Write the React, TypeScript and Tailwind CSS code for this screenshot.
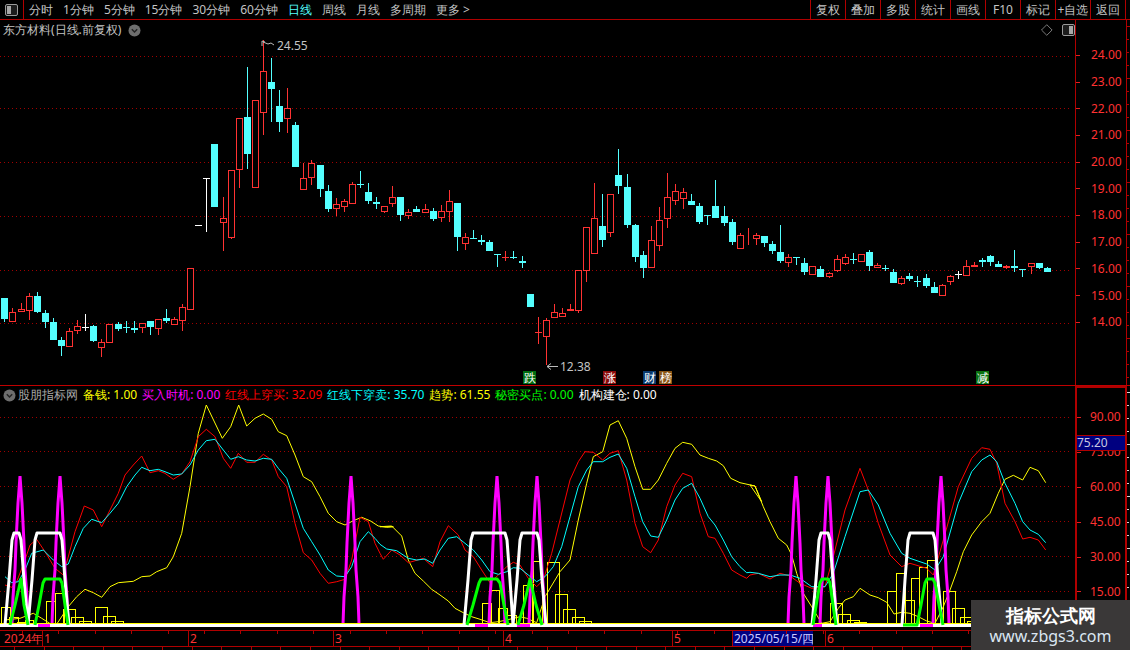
type Candle = [string, number, number, number, number];

// kind, body top, body bottom, wick top, wick bottom (page pixels)
const candles: Candle[] = [
  ["c",298,319,298,322],["r",312,322,308,322],["r",309,312,303,312],["r",296,311,293,320],["c",296,312,292,313],
  ["c",313,322,310,328],["c",322,340,318,340],["c",340,346,337,356],["r",331,347,328,347],["r",326,331,320,334],
  ["w",327,327,314,331],["c",326,341,325,342],["r",342,348,339,357],["r",324,343,324,343],["c",324,329,322,331],
  ["c",327,327,321,333],["c",328,330,321,333],["r",323,328,323,333],["c",321,327,321,335],["r",319,329,319,335],
  ["c",318,321,309,323],["r",319,325,317,325],["r",307,321,304,331],["r",268,310,268,310],["w",225,225,225,225],
  ["w",178,178,178,232],["c",144,207,144,207],["r",218,223,197,251],["r",170,238,170,239],["r",118,170,118,188],
  ["c",117,154,67,169],["r",100,188,100,188],["r",71,113,40,135],["c",82,89,58,122],["c",106,122,90,132],
  ["r",108,119,88,133],["c",125,167,122,167],["r",178,190,163,190],["r",163,178,160,185],["c",165,189,165,197],
  ["c",191,209,185,212],["r",204,209,198,216],["r",201,207,199,212],["r",184,204,182,204],["c",184,184,171,188],
  ["c",192,201,183,204],["c",202,204,197,209],["r",206,212,206,213],["r",197,204,186,207],["c",197,215,197,221],
  ["r",212,216,209,219],["c",209,212,206,212],["r",209,213,204,213],["c",211,219,208,221],["r",211,218,205,222],
  ["r",201,212,190,222],["c",203,237,203,251],["r",237,244,233,250],["c",238,238,230,238],["c",240,242,235,245],
  ["c",242,251,240,251],["c",254,255,254,267],["r",257,257,251,261],["c",257,257,251,259],["c",261,263,256,268],
  ["c",294,307,294,307],["r",332,332,317,344],["r",320,337,318,365],["r",312,318,304,318],["r",313,317,308,317],
  ["r",309,311,304,311],["r",270,311,270,313],["r",227,271,227,282],["r",218,254,183,254],["c",226,240,194,247],
  ["r",194,233,194,237],["c",175,186,149,194],["c",187,225,174,228],["c",225,257,224,262],["c",255,268,251,278],
  ["r",240,268,226,268],["r",220,246,207,251],["r",197,219,173,228],["r",191,201,184,205],["r",192,199,188,209],
  ["c",201,205,194,205],["c",206,222,203,224],["c",215,215,215,225],["c",206,218,180,218],["c",216,223,206,226],
  ["c",222,242,219,245],["r",235,249,233,249],["r",234,235,228,245],["r",235,239,233,245],["c",236,243,236,247],
  ["c",244,251,241,254],["c",252,261,225,263],["r",257,263,254,267],["c",257,258,257,265],["c",263,272,258,275],
  ["r",266,275,266,275],["c",269,277,266,277],["r",273,277,272,278],["r",259,271,255,272],["r",257,264,254,265],
  ["c",259,259,253,264],["r",254,262,254,262],["c",252,266,250,271],["r",265,268,263,268],["c",268,268,265,271],
  ["c",272,283,269,283],["r",278,284,276,285],["c",276,279,273,281],["c",281,281,276,287],["c",278,286,274,288],
  ["c",287,293,282,293],["r",285,296,284,296],["r",276,282,275,285],["w",274,274,271,279],["r",266,276,260,276],
  ["r",265,267,262,267],["c",260,262,258,267],["c",256,262,255,266],["c",264,267,261,267],["r",266,268,265,269],
  ["c",266,268,250,272],["c",269,269,269,277],["r",263,267,263,274],["c",263,268,263,269],["c",268,272,267,272],
];

const yellowLine = [
  [0,[15,660,60,655,100,640,125,655,165,680,205,620,230,590,255,568,280,578,305,592,330,560,355,548,400,544,425,530,450,528,470,515,500,503,520,470,545,400,570,260,595,100,619,15,667,115,692,80,716,15,740,78,765,55,790,42,815,58,835,95,860,107,885,165,910,230,935,245,960,290,985,340,1010,365,1035,375,1060,362,1085,352,1110,362,1135,378,1160,382,1180,380]],
  [380,[0,380,35,378,65,408,85,480,105,520,130,543,155,568,180,585,205,603,225,625,250,638,275,650,300,658,330,668,355,665,380,660,420,650,440,655,470,668,495,590,540,515,570,480,595,360,620,250,640,170,668,155,690,75,715,62,740,115,765,200,788,268,812,268,835,240,860,190,885,145,908,127,935,133,960,165,985,175,1010,183,1030,197,1052,235,1080,248,1125,258,1145,305]],
  [750,[0,255,15,258,40,320,60,365,85,415,110,435,125,465,140,520,160,580,185,620,215,670,240,665,265,625,285,600,310,590,330,565,360,585,385,593,410,607,432,642,455,637,480,640,505,650,530,663,555,670,580,620,600,570,620,515,640,455,665,405,695,365,720,340,745,280,765,238,790,226,818,240,840,202,865,212,887,248]],
] as [number, number[]][];

const redLine = [
  [0,[15,555,35,562,50,545,75,480,90,435,110,418,135,455,165,505,190,525,205,470,225,395,253,318,280,330,305,380,330,330,355,280,375,225,400,195,425,168,450,218,475,212,495,220,520,238,545,222,570,185,595,110,619,88,645,110,670,175,692,205,715,160,740,187,765,187,790,163,815,180,835,230,860,260,885,370,910,458,935,480,960,520,985,550,1010,545,1035,538,1055,480,1080,352,1105,365,1125,430]],
  [380,[0,460,10,478,35,450,60,465,85,488,130,475,158,500,180,425,205,377,235,405,255,450,280,470,305,510,330,548,355,525,380,500,400,487,420,495,445,535,470,560,490,540,515,460,540,360,570,240,595,185,615,155,640,157,668,180,690,160,715,152,740,240,765,370,788,440,812,458,835,420,860,320,885,255,908,220,935,230,960,340,985,410,1005,415,1030,460,1055,510,1080,525,1100,535]],
  [750,[0,525,25,520,60,537,90,520,120,528,150,550,185,565,225,560,250,470,285,330,330,205,355,270,385,370,420,465,455,500,480,490,530,505,550,525,580,420,625,260,665,175,695,143,720,148,740,190,765,310,795,365,818,417,840,412,865,420,887,450]],
] as [number, number[]][];

const cyanLine = [
  [0,[15,530,35,548,55,545,75,510,95,460,130,450,160,480,185,500,205,492,225,440,250,385,275,358,305,368,330,340,355,310,380,260,405,225,425,202,450,212,475,208,495,215,520,225,545,222,570,195,595,150,619,122,645,118,670,150,692,178,715,170,740,180,765,183,790,175,815,178,835,205,860,235,885,310,910,385,935,425,960,465,985,510,1010,528,1035,530,1055,500,1080,425,1105,395,1125,415]],
  [380,[0,433,20,447,50,452,85,475,110,480,135,477,158,490,180,450,205,415,230,410,255,430,280,450,305,480,330,515,355,523,380,515,400,503,420,505,445,525,470,545,495,530,520,500,545,440,570,350,595,260,620,210,640,185,668,185,690,172,715,162,740,205,765,290,788,365,812,408,835,412,860,360,885,300,908,265,935,250,960,295,985,350,1005,375,1030,420,1055,470,1080,500,1100,518]],
  [750,[0,517,25,520,60,530,90,525,120,525,150,535,185,560,225,560,250,520,285,410,330,275,355,270,385,315,420,400,455,460,480,475,530,492,555,510,580,470,625,310,665,215,695,180,720,165,740,185,765,250,795,310,818,365,840,390,865,403,887,428]],
] as [number, number[]][];

// the zoomed crops were 3x, so the points above are scaled back here
function toPoints(parts: [number, number[]][]) {
  const out: string[] = [];
  for (const [x0, pts] of parts) {
    for (let i = 0; i < pts.length; i += 2) {
      out.push(`${(x0 + pts[i] / 3).toFixed(1)},${(400 + pts[i + 1] / 3).toFixed(1)}`);
    }
  }
  return out.join(" ");
}

const peaks = [20, 60, 351, 497, 537, 796, 828, 941];
const peakShape = [[-8,624],[-7,597],[-5,570],[-4,543],[-2,503],[-1,490],[0,476],[1,490],[2,503],[4,543],[5,570],[7,597],[8,624]];

const whiteShapes = ["5,625 9,580 12,540 14,533 19,533 21,540 24,580 28,625 32,580 35,540 37,533 60,533 62,540 65,580 69,625", "464,625 468,580 471,540 473,533 505,533 507,540 510,580 513,625 517,580 520,540 522,533 537,533 539,540 542,580 546,625", "812,625 816,580 819,540 821,533 828,533 830,540 833,580 837,625", "902,625 905,580 908,540 910,533 933,533 935,540 938,580 942,625"];
const greenShapes = ["10,625 15,605 21,579 24,605 28,625", "35,625 39,605 43,583 45,579 60,579 62,583 65,605 68,625", "467,625 473,605 479,583 481,579 497,579 500,583 504,605 508,625", "518,625 524,605 530,579 536,605 542,625", "813,625 817,600 820,583 822,579 828,579 830,583 833,605 836,625", "903,625 917,625 921,605 925,583 927,579 933,579 935,583 939,605 943,625"];

const stairs = [
  [1,607,9],[9,617,9],[17,622,9],[25,620,8],[46,601,9],[55,593,9],[63,609,12],[71,617,12],[79,621,12],[95,607,12],[103,616,12],[111,621,12],
  [482,603,9],[490,590,9],[498,608,9],[507,615,9],[523,585,9],[533,561,9],[547,562,12],[555,594,12],[563,609,12],[572,617,12],[579,621,12],
  [830,603,12],[838,614,12],[847,620,12],[854,622,12],[887,591,9],[896,573,9],[905,600,9],[911,578,8],[919,567,8],[927,560,8],[943,591,12],[952,608,12],[960,617,12],[967,621,12],
];

const badges: [number, string, string][] = [
  [523, "跌", "#006b10"],
  [603, "涨", "#8a0a0a"],
  [643, "财", "#0a3a6e"],
  [659, "榜", "#8a5514"],
  [976, "减", "#0a7010"],
];

const leftTabs = ["分时", "1分钟", "5分钟", "15分钟", "30分钟", "60分钟", "日线", "周线", "月线", "多周期", "更多 >"];
const rightTabs = ["复权", "叠加", "多股", "统计", "画线", "F10", "标记", "+自选", "返回"];

const legend = [
  { label: "备钱", value: "1.00", color: "text-[#ffff00]" },
  { label: "买入时机", value: "0.00", color: "text-[#ff00ff]" },
  { label: "红线上穿买", value: "32.09", color: "text-[#ff0000]" },
  { label: "红线下穿卖", value: "35.70", color: "text-[#00ffff]" },
  { label: "趋势", value: "61.55", color: "text-[#ffff00]" },
  { label: "秘密买点", value: "0.00", color: "text-[#00ff00]" },
  { label: "机构建仓", value: "0.00", color: "text-white" },
];

const upperAxis = ["24.00", "23.00", "22.00", "21.00", "20.00", "19.00", "18.00", "17.00", "16.00", "15.00", "14.00"];
const lowerAxis = ["90.00", "75.00", "60.00", "45.00", "30.00", "15.00"];

const months = [
  { w: "w-[43px]", text: "2024年", box: false },
  { w: "w-[146px]", text: "1", box: false },
  { w: "w-[145px]", text: "2", box: false },
  { w: "w-[170px]", text: "3", box: false },
  { w: "w-[169px]", text: "4", box: false },
  { w: "w-[60px]", text: "5", box: false },
  { w: "w-[80px]", text: "2025/05/15/四", box: true },
  { w: "w-[13px]", text: "", box: false },
  { w: "w-[249px]", text: "6", box: false },
];

const axisTicks = Array.from({ length: 30 }, (_, i) => i * 36.4 + 22);
const footerTicks = Array.from({ length: 36 }, (_, i) => i * 29.6 + 14);

function RoundMenu() {
  return (
    <svg width="13" height="13" viewBox="0 0 13 13">
      <circle cx="6.5" cy="6.5" r="6" fill="#6e6e6e" />
      <path d="M3.8 5.2 L6.5 8 L9.2 5.2" fill="none" stroke="#222" strokeWidth="1.4" />
    </svg>
  );
}

function PanelToggle({ side }: { side: "left" | "right" }) {
  return (
    <svg width="13" height="12" viewBox="0 0 13 12">
      <rect x="0.5" y="0.5" width="12" height="11" rx="1.5" fill="#1c1c1c" stroke="#9a9a9a" />
      <rect x={side === "left" ? 2 : 7} y="2" width="4" height="8" fill="#a8a8a8" />
    </svg>
  );
}

function Candles() {
  return (
    <>
      {candles.map(([kind, top, bottom, high, low], i) => {
        const cx = Math.round(4.4 + 8.08 * i);
        const color = kind === "r" ? "#ff3232" : kind === "c" ? "#54ffff" : "#ffffff";
        const flat = top === bottom;
        return (
          <g key={i} shapeRendering="crispEdges">
            <rect x={cx} y={high} width={1} height={Math.max(low - high, 1)} fill={color} />
            {flat ? (
              <rect x={cx - 3} y={top} width={7} height={1} fill={color} />
            ) : kind === "r" ? (
              <rect x={cx - 2.5} y={top + 0.5} width={6} height={bottom - top - 1} fill="#000" stroke={color} />
            ) : (
              <rect x={cx - 3} y={top} width={7} height={bottom - top} fill={color} />
            )}
          </g>
        );
      })}
    </>
  );
}

function GridDots({ rows }: { rows: number[] }) {
  return (
    <g shapeRendering="crispEdges">
      {rows.map((y) => (
        <line key={y} x1="0" x2="1072" y1={y + 0.5} y2={y + 0.5} stroke="#a00000" strokeDasharray="1 3" />
      ))}
    </g>
  );
}

function PriceChart() {
  return (
    <svg width="1075" height="345" viewBox="0 40 1075 345" className="block overflow-visible">
      <GridDots rows={[56, 108, 162, 216, 270, 323]} />
      <Candles />
      <path d="M262 46 L262 41 L265 42 M263 42 L268 44 L271 43 L274 45" fill="none" stroke="#bbb" />
      <text x="277" y="50" fontSize="12" fill="#c4c4c4">24.55</text>
      <path d="M547 366.5 L558 366.5 M547 366.5 L551 363.5 M547 366.5 L551 369.5" fill="none" stroke="#bbb" />
      <text x="560" y="371" fontSize="12" fill="#c4c4c4">12.38</text>
      {badges.map(([x, ch, bg]) => (
        <g key={ch}>
          <rect x={x} y="371" width="13" height="13" fill={bg} />
          <text x={x + 0.5} y="382" fontSize="12" fill="#fff">{ch}</text>
        </g>
      ))}
    </svg>
  );
}

function IndicatorChart() {
  return (
    <svg width="1075" height="226" viewBox="0 404 1075 226" className="block">
      <GridDots rows={[417, 451, 486, 521, 556, 591]} />
      <g shapeRendering="crispEdges" fill="none" stroke="#ffff00">
        {stairs.map(([x, y, w]) => (
          <rect key={`${x}-${y}`} x={x + 0.5} y={y + 0.5} width={w} height={623 - y} />
        ))}
      </g>
      <polyline points={toPoints(yellowLine)} fill="none" stroke="#ffff00" />
      <polyline points={toPoints(redLine)} fill="none" stroke="#ff0000" />
      <polyline points={toPoints(cyanLine)} fill="none" stroke="#00ffff" />
      {peaks.map((px) => (
        <polyline
          key={px}
          points={peakShape.map(([dx, y]) => `${px + dx},${y}`).join(" ")}
          fill="none"
          stroke="#ff00ff"
          strokeWidth="3"
          strokeLinejoin="bevel"
        />
      ))}
      <rect x="0" y="624" width="1075" height="3" fill="#fff" shapeRendering="crispEdges" />
      <rect x="0" y="623" width="1075" height="1" fill="#ffff00" shapeRendering="crispEdges" />
      {[[38, 12], [475, 13], [517, 13], [813, 9], [920, 13]].map(([x, w]) => (
        <rect key={x} x={x} y="624" width={w} height="3" fill="#ff00ff" />
      ))}
      {whiteShapes.map((p) => (
        <polyline key={p} points={p} fill="none" stroke="#fff" strokeWidth="3" strokeLinejoin="round" />
      ))}
      {greenShapes.map((p) => (
        <polyline key={p} points={p} fill="none" stroke="#00ff00" strokeWidth="3" strokeLinejoin="round" />
      ))}
    </svg>
  );
}

function AxisRow({ text, height, gap }: { text: string; height: string; gap: string }) {
  return (
    <div className={`flex items-center ${height}`}>
      <div className="w-[4px] h-px bg-[#e02020]" />
      <span className={`text-[12px] leading-none text-[#ff3232] ${gap}`}>{text}</span>
    </div>
  );
}

function EdgeTicks({ height, color }: { height: number; color: string }) {
  return (
    <svg width="3" height={height} className="block" shapeRendering="crispEdges">
      {Array.from({ length: Math.floor(height / 13) }, (_, i) => (
        <rect key={i} x="0" y={i * 13 + 6} width={i % 4 === 0 ? 3 : 2} height="1" fill={color} />
      ))}
    </svg>
  );
}

export default function App() {
  return (
    <div className="relative w-[1130px] h-[650px] overflow-hidden bg-black [font-family:'Liberation_Sans','Noto_Sans_CJK_SC',sans-serif] text-[12px] text-[#c4c4c4]">
      <header className="flex h-[20px] items-center border-b border-[#b00000]">
        <div className="flex h-full w-[24px] items-center justify-center border-r border-[#b00000]">
          <PanelToggle side="left" />
        </div>
        <nav className="flex flex-1 items-center gap-[10px] pl-[5px]">
          {leftTabs.map((tab) => (
            <span key={tab} className={tab === "日线" ? "text-[#54ffff]" : ""}>{tab}</span>
          ))}
        </nav>
        <div className="flex h-full border-l border-[#b00000] mr-[4px]">
          {rightTabs.map((tab) => (
            <span key={tab} className="flex w-[35px] items-center justify-center border-r border-[#b00000]">{tab}</span>
          ))}
        </div>
      </header>

      <section className="flex h-[365px]">
        <div className="w-[1075px]">
          <div className="flex h-[20px] items-center pl-[3px]">
            <span className="whitespace-nowrap">东方材料(日线.前复权)</span>
            <span className="ml-[7px] flex"><RoundMenu /></span>
            <svg width="12" height="12" viewBox="0 0 12 12" className="ml-[900px]">
              <path d="M6 0.5 L11.5 6 L6 11.5 L0.5 6 Z" fill="none" stroke="#808080" />
            </svg>
            <span className="ml-[9px] flex"><PanelToggle side="right" /></span>
          </div>
          <PriceChart />
        </div>
        <div className="w-[52px] border-x border-[#b00000] pt-[22px]">
          {upperAxis.map((t) => (
            <AxisRow key={t} text={t} height="h-[26.7px]" gap="ml-[11px]" />
          ))}
        </div>
        <EdgeTicks height={365} color="#b00000" />
      </section>

      <section className="flex h-[245px] border-t border-[#c00000]">
        <div className="w-[1075px]">
          <div className="flex h-[18px] items-center whitespace-nowrap pl-[3px]">
            <RoundMenu />
            <span className="ml-[2px] mr-[4px] w-[61px] text-[#a8a8a8]">股朋指标网</span>
            <div className="flex gap-[5px]">
              {legend.map((item) => (
                <span key={item.label} className={item.color}>{item.label}: {item.value}</span>
              ))}
            </div>
          </div>
          <IndicatorChart />
        </div>
        <div className="relative w-[52px] border-x-2 border-t-2 border-[#b00000] pt-[12px]">
          {lowerAxis.map((t) => (
            <AxisRow key={t} text={t} height="h-[34.9px]" gap="ml-[9px]" />
          ))}
          <div className="absolute left-0 top-[47px] flex h-[16px] w-[48px] items-center border-y border-[#b00000] bg-[#000080] text-[#c8c8e0]">75.20</div>
        </div>
        <EdgeTicks height={245} color="#d8d8d8" />
      </section>

      <footer className="relative h-[20px] border-t border-[#b00000] text-[#ff3232]">
        <svg width="1075" height="3" className="absolute left-0 top-0" shapeRendering="crispEdges">
          {axisTicks.map((x) => (
            <rect key={x} x={x} y="0" width="1" height="3" fill="#b00000" />
          ))}
        </svg>
        <div className="flex h-[16px] w-[1075px] items-center border-b border-[#b00000]">
          {months.map((m, i) => (
            <div
              key={i}
              className={`flex h-full items-center overflow-hidden whitespace-nowrap ${m.w} ${m.box ? "bg-[#000080] pl-[1px] text-[#c8c8ff]" : "border-r border-[#b00000]"} ${i === 0 ? "pl-[4px]" : m.box ? "" : "pl-[1px]"}`}
            >
              {m.text}
            </div>
          ))}
        </div>
        <svg width="1075" height="3" className="block" shapeRendering="crispEdges">
          {footerTicks.map((x) => (
            <rect key={x} x={x} y="0" width="1" height="3" fill="#b00000" />
          ))}
        </svg>
      </footer>

      <div className="absolute bottom-0 right-0 flex h-[50px] w-[159px] flex-col items-center justify-center bg-[#3a3838]">
        <span className="text-[18px] font-bold leading-[22px] text-white">指标公式网</span>
        <span className="text-[16px] leading-[20px] text-[#dbe6f2]">www.zbgs3.com</span>
      </div>
    </div>
  );
}
